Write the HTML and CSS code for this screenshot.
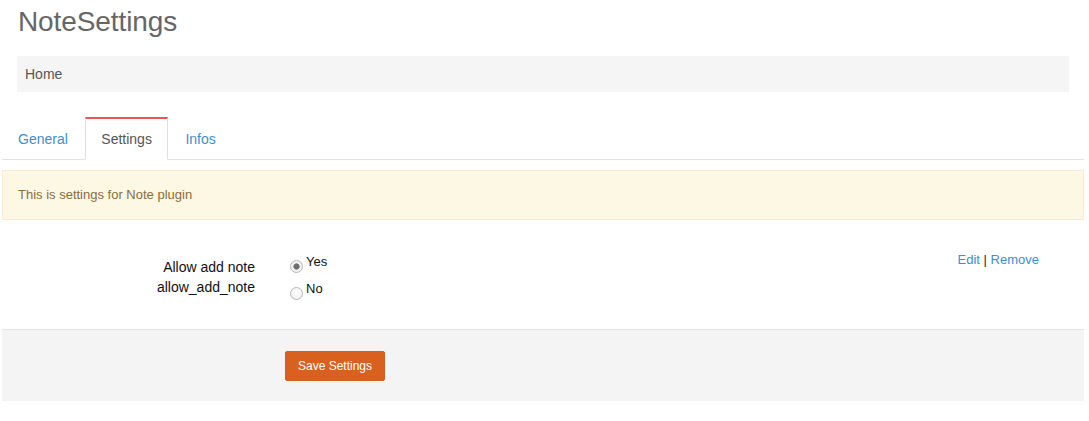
FILE: index.html
```html
<!DOCTYPE html>
<html lang="en">
<head>
<meta charset="utf-8">
<title>NoteSettings</title>
<link rel="stylesheet" href="styles.css">
</head>
<body>
<div class="page">
  <h1 class="title">NoteSettings</h1>
  <div class="breadcrumb">Home</div>

  <ul class="tabs">
    <li class="tab"><a href="#">General</a></li>
    <li class="tab active"><a href="#">Settings</a></li>
    <li class="tab"><a href="#">Infos</a></li>
  </ul>

  <div class="alert">This is settings for Note plugin</div>

  <form class="settings">
    <div class="row">
      <div class="label-col">
        <div class="label">Allow add note</div>
        <div class="key">allow_add_note</div>
      </div>
      <div class="options">
        <label class="option"><input type="radio" name="allow_add_note" class="radio" checked><span>Yes</span></label>
        <label class="option"><input type="radio" name="allow_add_note" class="radio"><span>No</span></label>
      </div>
      <div class="actions"><a href="#">Edit</a> <span class="sep">|</span> <a href="#">Remove</a></div>
    </div>
    <div class="footer">
      <button type="button" class="btn">Save Settings</button>
    </div>
  </form>
</div>
</body>
</html>
```

FILE: styles.css
```css
* { box-sizing: border-box; }

body {
  margin: 0;
  background: #fff;
  font-family: "Liberation Sans", Arial, sans-serif;
  font-size: 14px;
  color: #333;
}

.page {
  width: 1082px;
  margin-left: 2px;
}

.title {
  margin: 6px 0 0 16px;
  font-size: 28px;
  line-height: 32px;
  font-weight: normal;
  color: #666;
  letter-spacing: -0.1px;
}

.breadcrumb {
  margin: 18px 15px 0 15px;
  padding: 8px;
  line-height: 20px;
  background: #f5f5f5;
  color: #555;
}

.tabs {
  list-style: none;
  margin: 25px 0 0 0;
  padding: 0;
  display: flex;
  border-bottom: 1px solid #e3e3e3;
}

.tab {
  margin-right: 1.5px;
  margin-bottom: -1px;
}

.tab a {
  display: block;
  padding: 10px 15px;
  line-height: 20px;
  border: 1px solid transparent;
  border-top-width: 2px;
  color: #3d8ed6;
  text-decoration: none;
}

.tab.active a {
  border-color: #e0e0e0;
  border-top-color: #f0525c;
  border-bottom-color: #fff;
  background: #fff;
  color: #555;
}

.alert {
  margin-top: 10px;
  padding: 15px;
  border: 1px solid #faebcc;
  background: #fcf8e3;
  color: #8a6d3b;
  font-size: 13px;
  line-height: 18px;
}

.settings {
  margin: 0;
}

.row {
  display: flex;
  align-items: flex-start;
  padding: 30px 0 21px 0;
}

.label-col {
  width: 253px;
  margin-top: 7px;
  text-align: right;
  color: #111;
  line-height: 20px;
}

.options {
  margin-left: 35px;
  margin-top: 4px;
  display: flex;
  flex-direction: column;
}

.option {
  display: flex;
  align-items: flex-start;
  height: 27px;
  font-size: 13px;
  line-height: 16px;
  color: #111;
}

.radio {
  -webkit-appearance: none;
  appearance: none;
  width: 13px;
  height: 13px;
  margin: 6px 3px 0 0;
  border: 1px solid #b8b8b8;
  border-radius: 50%;
  background: radial-gradient(circle at 50% 40%, #ffffff 0%, #f2f2f2 70%, #e6e6e6 100%);
}

.radio:checked {
  background: radial-gradient(circle, #6e6e6e 0, #6e6e6e 2.5px, #a0a0a0 3px, #f4f4f4 3.5px, #ececec 100%);
}

.actions {
  margin-left: auto;
  margin-right: 45px;
  margin-top: 1px;
  font-size: 13px;
  line-height: 18px;
  color: #222;
}

.actions a {
  color: #3d8ed6;
  text-decoration: none;
}

.footer {
  border-top: 1px solid #e4e4e4;
  background: #f4f4f4;
  padding: 21px 0 20px 283px;
}

.btn {
  display: block;
  width: 100px;
  height: 30px;
  padding: 0;
  border: 1px solid #d4601f;
  border-radius: 2px;
  background: #d9611f;
  color: #fff;
  font-family: "Liberation Sans", Arial, sans-serif;
  font-size: 12px;
  line-height: 28px;
}
```
